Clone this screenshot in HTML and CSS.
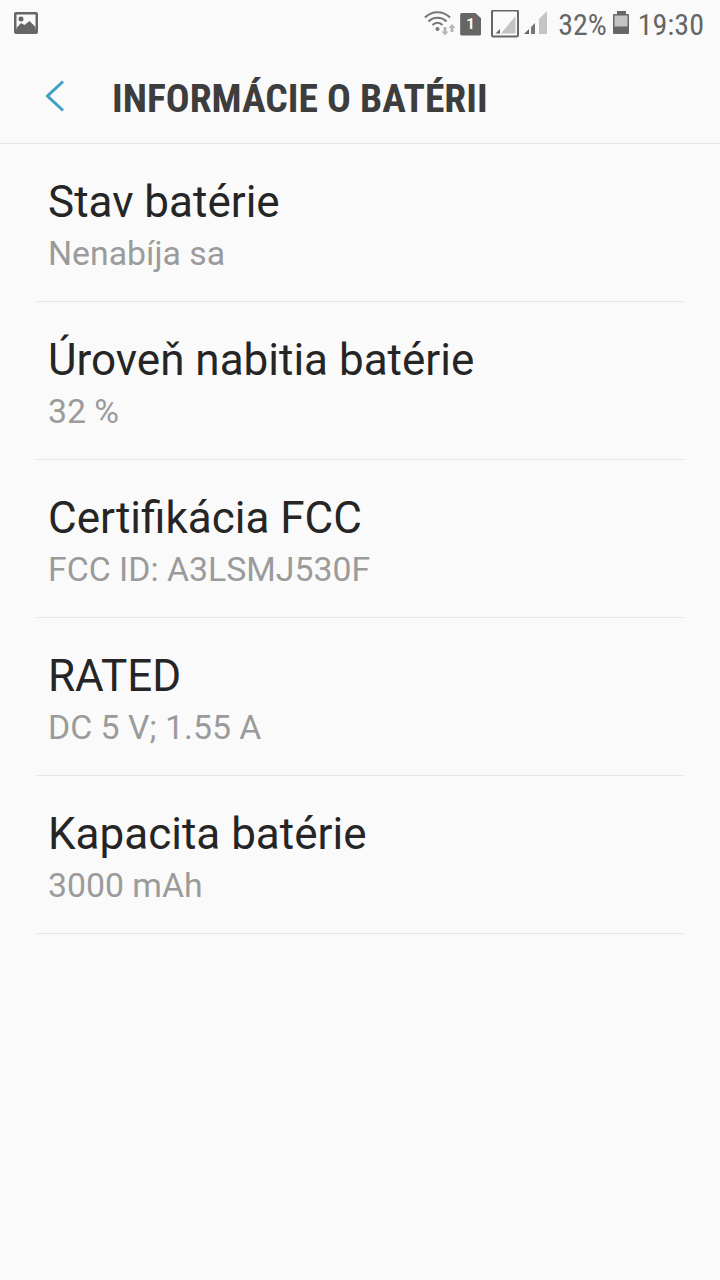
FILE: index.html
```html
<!DOCTYPE html>
<html lang="sk">
<head>
    <meta charset="UTF-8">
    <meta name="viewport" content="width=device-width, initial-scale=1.0">
    <title>Informácie o batérii</title>
    <link rel="stylesheet" href="styles.css">
</head>
<body>
    <div class="status-bar">
        <svg class="icon-picture" width="24" height="24" viewBox="0 0 24 24">
            <rect x="0" y="0" width="24" height="22" rx="2" fill="#666"/>
            <rect x="2.500" y="2.500" width="19" height="15" fill="#fafafa"/>
            <circle cx="7" cy="7" r="2.500" fill="#666"/>
            <path d="M2.500 16 L7 11 L10.500 13 L15.500 9 L21.500 15 V19 H2.500 Z" fill="#666"/>
        </svg>
        <div class="status-right">
            <svg width="32" height="28" viewBox="0 0 32 28">
                <path d="M1 7.500 C8 0.500 19 0.500 26 7.500" fill="none" stroke="#777" stroke-width="2.200"/>
                <path d="M4.500 11.500 C9.500 6.500 17.500 6.500 22.500 11.500" fill="none" stroke="#777" stroke-width="2.200"/>
                <path d="M8.500 15 C11.500 12 15.500 12 18.500 15" fill="none" stroke="#777" stroke-width="2.200"/>
                <circle cx="13.500" cy="19" r="2" fill="#777"/>
                <path d="M19.500 17 H22.500 V21.500 H24.500 L21 25.500 L17.500 21.500 H19.500 Z" fill="#b5b5b5"/>
                <path d="M28 14 L31.500 18 H29.500 V22 H26.500 V18 H24.500 Z" fill="#b5b5b5"/>
            </svg>
            <div class="sim-badge">1</div>
            <svg class="no-sim" width="28" height="28" viewBox="0 0 28 28">
                <rect x="1" y="0.500" width="26" height="26" rx="1.500" fill="none" stroke="#666" stroke-width="2"/>
                <path d="M10 23.500 L24.500 6 V23.500 Z" fill="#c4c4c4"/>
                <path d="M4.500 23.500 L9 19 V23.500 Z" fill="#666"/>
            </svg>
            <svg class="signal" width="24" height="28" viewBox="0 0 24 28">
                <path d="M0 24 L5 19 V24 Z" fill="#666"/>
                <path d="M7 17 L11 13 V24 H7 Z" fill="#777"/>
                <path d="M15 9 L23 1 V24 H15 Z" fill="#c4c4c4"/>
            </svg>
            <span class="status-text percent">32%</span>
            <svg class="battery" width="16" height="28" viewBox="0 0 16 28">
                <path d="M1 4 H4 V1 H13 V4 H15 Q16 4 16 5 V23 Q16 24 15 24 H1 Q0 24 0 23 V5 Q0 4 1 4 Z" fill="#666"/>
                <rect x="1.500" y="5.500" width="13" height="11" fill="#c4c4c4"/>
            </svg>
            <span class="status-text clock">19:30</span>
        </div>
    </div>

    <header class="app-bar">
        <svg class="back" width="24" height="36" viewBox="0 0 24 36">
            <path d="M19 3.500 L3.500 18 L19 32.500" fill="none" stroke="#3f9fc4" stroke-width="3"/>
        </svg>
        <h1>INFORMÁCIE O BATÉRII</h1>
    </header>

    <ul class="info-list">
        <li>
            <div class="item-title">Stav batérie</div>
            <div class="item-sub">Nenabíja sa</div>
        </li>
        <li>
            <div class="item-title">Úroveň nabitia batérie</div>
            <div class="item-sub">32 %</div>
        </li>
        <li>
            <div class="item-title">Certifikácia FCC</div>
            <div class="item-sub">FCC ID: A3LSMJ530F</div>
        </li>
        <li>
            <div class="item-title">RATED</div>
            <div class="item-sub">DC 5 V; 1.55 A</div>
        </li>
        <li>
            <div class="item-title">Kapacita batérie</div>
            <div class="item-sub">3000 mAh</div>
        </li>
    </ul>
</body>
</html>
```

FILE: styles.css
```css
* {
    box-sizing: border-box;
    margin: 0;
    padding: 0;
}

body {
    font-family: Roboto, sans-serif;
    background-color: #fafafa;
    height: 1280px;
    overflow: hidden;
}

.status-bar {
    height: 48px;
    padding: 10px 16px 10px 14px;
    display: flex;
    justify-content: space-between;
    align-items: center;
}

.status-right {
    display: flex;
    align-items: center;
}

.sim-badge {
    width: 21px;
    height: 23px;
    margin-left: 4px;
    margin-right: 10px;
    background-color: #666;
    color: #fafafa;
    font-size: 15px;
    font-weight: 700;
    line-height: 23px;
    text-align: center;
    border-radius: 2px;
    clip-path: polygon(0 0, 70% 0, 100% 25%, 100% 100%, 0 100%);
}

.signal {
    margin-left: 5px;
}

.status-text {
    color: #666;
    font-size: 30px;
    font-stretch: condensed;
}

.percent {
    margin-left: 10px;
}

.battery {
    margin-left: 6px;
}

.clock {
    margin-left: 9px;
}

.app-bar {
    height: 96px;
    display: flex;
    align-items: center;
    padding-left: 44px;
    border-bottom: 1px solid #e6e6e6;
}

.app-bar h1 {
    margin-left: 44px;
    padding-top: 6px;
    font-size: 39.600px;
    font-weight: 700;
    font-stretch: condensed;
    color: #3d3d3d;
}

.info-list {
    list-style: none;
    padding: 0 36px;
}

.info-list li {
    height: 158px;
    padding: 31px 12px 0;
    border-bottom: 1px solid #e6e6e6;
}

.item-title {
    font-size: 44px;
    line-height: 54px;
    color: #252525;
}

.item-sub {
    font-size: 33.800px;
    line-height: 49px;
    color: #9b9b9b;
}
```
